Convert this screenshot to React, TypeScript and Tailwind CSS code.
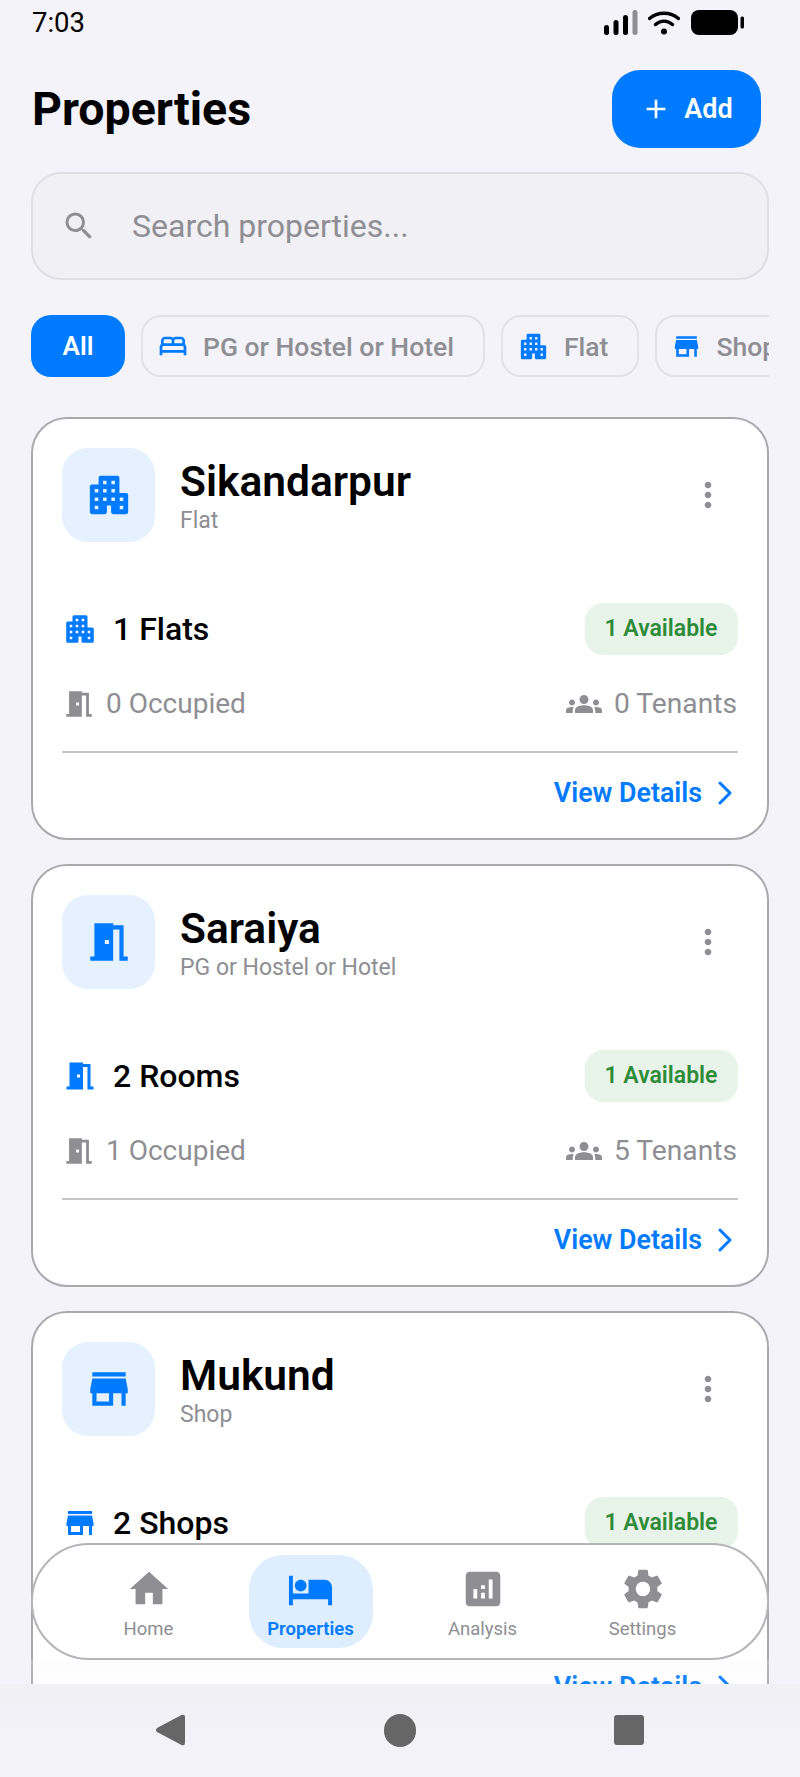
import React from "react";
import {
  MdAdd, MdSearch, MdOutlineBed, MdStore, MdMeetingRoom, MdGroups, MdMoreVert,
  MdHome, MdHotel, MdAnalytics, MdSettings,
} from "react-icons/md";

const APARTMENT_OUTLINE =
  "M8 2.8H16a1 1 0 0 1 1 1V11H20.2a1 1 0 0 1 1 1V20.2a1 1 0 0 1 -1 1H14a1 1 0 0 1 -1 -1V17H11V20.2a1 1 0 0 1 -1 1H3.8a1 1 0 0 1 -1 -1V8a1 1 0 0 1 1 -1H7V3.8a1 1 0 0 1 1 -1Z";
const APARTMENT_WINDOWS = [
  [9, 5], [13, 5], [5, 9], [9, 9], [13, 9], [5, 13], [9, 13], [13, 13], [17, 13], [5, 17], [17, 17],
];
const APARTMENT_PATH =
  APARTMENT_OUTLINE + APARTMENT_WINDOWS.map(([x, y]) => `M${x + 0.15} ${y + 0.15}h1.7v1.7h-1.7Z`).join("");

function RoundApartment({ size, color, className }: { size?: number; color?: string; className?: string }) {
  return (
    <svg width={size} height={size} viewBox="0 0 24 24" className={className} fill={color ?? "currentColor"}>
      <path d={APARTMENT_PATH} fillRule="evenodd" />
    </svg>
  );
}

function StatusIcons() {
  return (
    <div className="flex items-center gap-[10px]">
      <svg width="34" height="26" viewBox="0 0 34 26">
        <rect x="0" y="15" width="5" height="10" rx="2.5" fill="#000" />
        <rect x="9.5" y="10" width="5" height="15" rx="2.5" fill="#000" />
        <rect x="19" y="5" width="5" height="20" rx="2.5" fill="#000" />
        <rect x="28.5" y="0" width="5" height="25" rx="2.5" fill="#8e8e93" />
      </svg>
      <svg width="32" height="26" viewBox="0 0 32 26" fill="none" stroke="#000" strokeWidth="3.4" strokeLinecap="round">
        <path d="M1.5 8.5C9.5 1.5 22.5 1.5 30.5 8.5" />
        <path d="M7.5 14.5C12.5 10 19.5 10 24.5 14.5" />
        <circle cx="16" cy="21.5" r="3" fill="#000" stroke="none" />
      </svg>
      <svg width="54" height="26" viewBox="0 0 54 26" className="ml-[1px]">
        <rect x="0" y="0" width="47" height="25" rx="8" fill="#000" />
        <rect x="49.5" y="6.5" width="3.5" height="12" rx="1.5" fill="#000" />
      </svg>
    </div>
  );
}

function Chip({ icon, label }: { icon: React.ReactNode; label: string }) {
  return (
    <div className="flex h-[62px] shrink-0 items-center gap-[14px] rounded-[20px] border-2 border-[#e1e1e6] bg-[#f3f3f9] pl-[14px] pr-[29px]">
      <span className="text-[#007aff]">{icon}</span>
      <span className="pt-[2px] text-[26.5px] font-medium leading-none text-[#8e8e93]">{label}</span>
    </div>
  );
}

type CardProps = {
  icon: React.ElementType;
  name: string;
  type: string;
  count: string;
  occupied: string;
  tenants: string;
};

function PropertyCard({ icon: Icon, name, type, count, occupied, tenants }: CardProps) {
  return (
    <div className="h-[423px] shrink-0 rounded-[36px] border-2 border-[#a9a9ae] bg-white px-[29px] pt-[29px]">
      <div className="flex h-[94px] items-center">
        <div className="flex h-[94px] w-[93px] items-center justify-center rounded-[26px] bg-[#e5f1ff]">
          <Icon size={50} color="#007aff" />
        </div>
        <div className="ml-[25px] flex-1 pt-[3px]">
          <div className="text-[42.5px] font-semibold leading-[46px] text-black">{name}</div>
          <div className="mt-[2px] text-[23px] leading-[28px] text-[#8e8e93]">{type}</div>
        </div>
        <MdMoreVert size={40} color="#8e8e93" className="mr-[10px]" />
      </div>
      <div className="mt-[61px] flex h-[52px] items-center justify-between">
        <div className="flex items-center">
          <Icon size={36} color="#007aff" />
          <span className="ml-[15px] text-[32px] font-medium leading-none text-black">{count}</span>
        </div>
        <div className="flex h-[52px] w-[153px] items-center justify-center rounded-[18px] bg-[#e8f3e9] pr-[1px] text-[23px] font-semibold text-[#2e8b3a]">
          1 Available
        </div>
      </div>
      <div className="mt-[25px] flex h-[48px] items-center justify-between">
        <div className="flex items-center">
          <MdMeetingRoom size={34} color="#8e8e93" />
          <span className="ml-[10px] text-[28px] leading-none text-[#8e8e93]">{occupied}</span>
        </div>
        <div className="flex items-center pr-[1px]">
          <MdGroups size={36} color="#8e8e93" />
          <span className="ml-[12px] text-[28.2px] leading-none text-[#8e8e93]">{tenants}</span>
        </div>
      </div>
      <div className="mt-[23px] h-[2px] bg-[#c4c4c8]" />
      <div className="mt-[19px] flex h-[42px] items-center justify-end text-[#007aff]">
        <span className="text-[26.8px] font-semibold leading-none">View Details</span>
        <svg width="16" height="24" viewBox="0 0 16 24" fill="none" stroke="currentColor" strokeWidth="3" strokeLinecap="round" strokeLinejoin="round" className="ml-[15px] mr-[5px]">
          <path d="M3 2 L13 12 L3 22" />
        </svg>
      </div>
    </div>
  );
}

function NavItem({ icon: Icon, label, active, size, className }: { icon: React.ElementType; label: string; active?: boolean; size: number; className: string }) {
  return (
    <div className={className}>
      <span className="flex h-[44px] items-center justify-center">
        <Icon size={size} />
      </span>
      <span className={active ? "mt-[6px] text-[18.5px] font-semibold leading-[24px]" : "mt-[6px] text-[18.5px] leading-[24px]"}>{label}</span>
    </div>
  );
}

export default function App() {
  return (
    <div className="flex h-[1777px] w-[800px] flex-col overflow-hidden bg-[#f3f3f9] font-['Roboto',sans-serif]">
      <div className="relative h-[1684px] shrink-0 overflow-hidden">
        <div className="flex h-[46px] items-center justify-between pl-[32px] pr-[55px]">
          <span className="text-[27.5px] leading-none text-black">7:03</span>
          <StatusIcons />
        </div>
        <div className="mt-[24px] flex h-[78px] items-center justify-between pl-[32px] pr-[39px]">
          <h1 className="text-[46.5px] font-bold leading-none text-black">Properties</h1>
          <div className="flex h-[78px] w-[149px] items-center justify-center gap-[12px] rounded-[28px] bg-[#007aff] text-white">
            <MdAdd size={32} />
            <span className="text-[27px] font-semibold leading-none">Add</span>
          </div>
        </div>
        <div className="mx-[31px] mt-[24px] flex h-[108px] items-center rounded-[30px] border-2 border-[#dfdfe4] bg-[#f0f0f5] pl-[28px]">
          <MdSearch size={36} color="#8e8e93" />
          <span className="ml-[35px] text-[32px] leading-none text-[#8e8e93]">Search properties...</span>
        </div>
        <div className="mx-[31px] mt-[35px] flex h-[62px] gap-[16px] overflow-hidden">
          <div className="flex h-[62px] w-[94px] shrink-0 items-center justify-center rounded-[20px] bg-[#007aff] text-[26px] font-semibold leading-none text-white">
            All
          </div>
          <Chip icon={<MdOutlineBed size={32} className="block" />} label="PG or Hostel or Hotel" />
          <Chip icon={<RoundApartment size={33} className="block" />} label="Flat" />
          <Chip icon={<MdStore size={31} className="block" />} label="Shop" />
        </div>
        <div className="mx-[31px] mt-[40px] flex flex-col gap-[24px]">
          <PropertyCard icon={RoundApartment} name="Sikandarpur" type="Flat" count="1 Flats" occupied="0 Occupied" tenants="0 Tenants" />
          <PropertyCard icon={MdMeetingRoom} name="Saraiya" type="PG or Hostel or Hotel" count="2 Rooms" occupied="1 Occupied" tenants="5 Tenants" />
          <PropertyCard icon={MdStore} name="Mukund" type="Shop" count="2 Shops" occupied="1 Occupied" tenants="2 Tenants" />
        </div>
        <div className="absolute inset-x-0 bottom-0 h-[24px] bg-gradient-to-b from-[#f3f3f9]/20 to-[#f3f3f9]/5" />
        <div className="absolute inset-x-[31px] top-[1543px] flex h-[117px] items-center gap-[48px] rounded-[58px] border-2 border-[#b4b4b9] bg-white pl-[63.5px]">
          <NavItem icon={MdHome} label="Home" size={46} className="flex h-[93px] w-[104px] flex-col items-center justify-center pt-[5px] text-[#8e8e93]" />
          <NavItem icon={MdHotel} label="Properties" active size={47} className="flex h-[93px] w-[124px] flex-col items-center justify-center rounded-[34px] bg-[#dfeeff] pt-[5px] text-[#007aff]" />
          <NavItem icon={MdAnalytics} label="Analysis" size={46} className="flex h-[93px] w-[124px] flex-col items-center justify-center pt-[5px] text-[#8e8e93]" />
          <NavItem icon={MdSettings} label="Settings" size={48} className="flex h-[93px] w-[100px] flex-col items-center justify-center pt-[5px] text-[#8e8e93]" />
        </div>
      </div>
      <div className="flex h-[93px] items-center justify-center gap-[198px] bg-gradient-to-b from-[#f0f0f5] to-[#f3f3f9] pb-[1px] pr-[3px]">
        <svg width="32" height="34" viewBox="0 0 32 34">
          <path d="M27.5 2 L3 15 Q1 17 3 19 L27.5 32 Q31 33 31 30 L31 4 Q31 1 27.5 2Z" fill="#666666" />
        </svg>
        <div className="h-[33px] w-[32px] rounded-full bg-[#666666]" />
        <div className="h-[30px] w-[30px] rounded-[3px] bg-[#666666]" />
      </div>
    </div>
  );
}
